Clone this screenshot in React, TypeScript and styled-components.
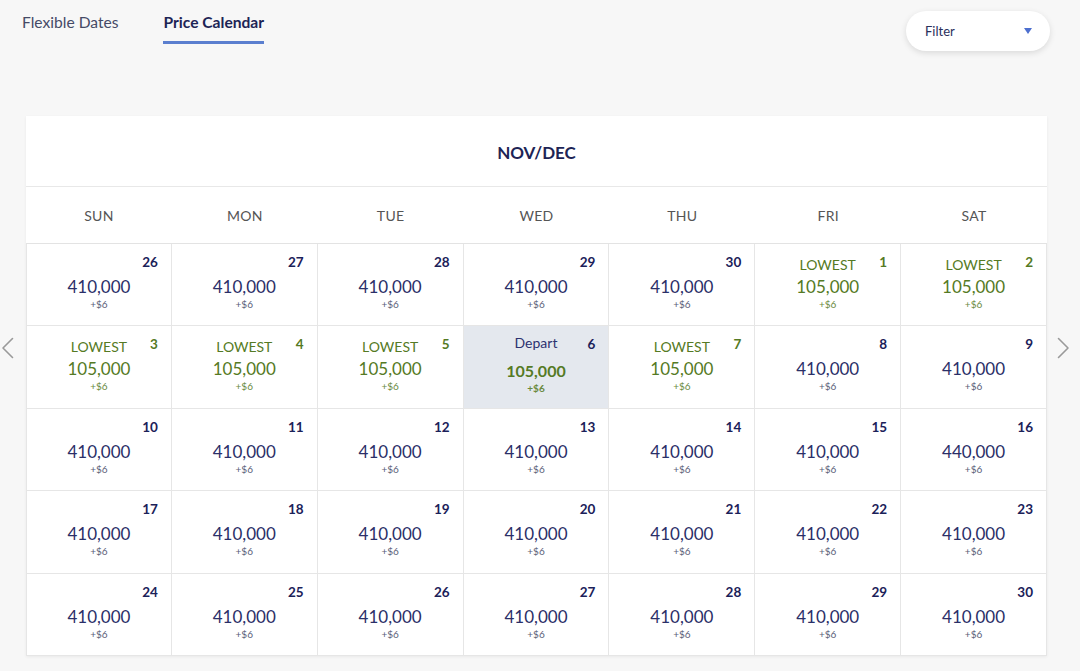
import React from 'react';
import styled, { createGlobalStyle } from 'styled-components';

const GlobalStyle = createGlobalStyle`
  body {
    margin: 0;
    background: #f7f7f7;
    font-family: Lato, "Open Sans", sans-serif;
  }
`;

const Page = styled.div`
  width: 1080px;
  height: 671px;
  overflow: hidden;
`;

const TopBar = styled.div`
  display: flex;
  align-items: flex-start;
  justify-content: space-between;
  padding: 10px 30px 0 22px;
  height: 105px;
  box-sizing: border-box;
`;

const Tabs = styled.div`
  display: flex;
  gap: 45px;
`;

const Tab = styled.div<{ $active?: boolean }>`
  font-size: 15.6px;
  line-height: 20px;
  padding-top: 2px;
  padding-bottom: 9px;
  color: ${(p) => (p.$active ? '#1d2455' : '#454a66')};
  font-weight: ${(p) => (p.$active ? 700 : 400)};
  border-bottom: 3px solid ${(p) => (p.$active ? '#5b7fcf' : 'transparent')};
`;

const FilterButton = styled.div`
  width: 144px;
  height: 40px;
  margin-top: 1px;
  box-sizing: border-box;
  border-radius: 20px;
  background: #fff;
  box-shadow: 0 2px 6px rgba(0, 0, 0, 0.12);
  display: flex;
  align-items: center;
  justify-content: space-between;
  padding: 0 18px 0 19px;
  font-size: 13px;
  color: #2a2f5c;
`;

const Caret = styled.span`
  width: 0;
  height: 0;
  border-left: 4px solid transparent;
  border-right: 4px solid transparent;
  border-top: 6px solid #4d6fcf;
`;

const Stage = styled.div`
  display: flex;
  align-items: flex-start;
  margin-top: 11px;
`;

const Arrow = styled.div<{ $side: 'left' | 'right' }>`
  flex: none;
  width: ${(p) => (p.$side === 'left' ? '26px' : '33px')};
  display: flex;
  justify-content: ${(p) => (p.$side === 'left' ? 'flex-start' : 'center')};
  padding-left: ${(p) => (p.$side === 'left' ? '1px' : '0')};
  box-sizing: border-box;
  margin-top: 221px;
  color: #9a9a9a;
`;

const Card = styled.div`
  flex: none;
  width: 1021px;
  background: #fff;
  box-shadow: 0 1px 3px rgba(0, 0, 0, 0.06);
`;

const MonthHeader = styled.div`
  height: 71px;
  display: flex;
  align-items: center;
  justify-content: center;
  font-size: 17px;
  font-weight: 700;
  color: #1d2455;
  border-bottom: 1px solid #e8e8e8;
  padding-top: 2px;
  box-sizing: border-box;
`;

const DayNames = styled.div`
  display: grid;
  grid-template-columns: repeat(7, 1fr);
  height: 57px;
  border-bottom: 1px solid #e3e3e3;
  box-sizing: border-box;
`;

const DayName = styled.div`
  display: flex;
  align-items: center;
  justify-content: center;
  font-size: 14px;
  color: #555;
  letter-spacing: 0.3px;
  padding-top: 1px;
`;

const Grid = styled.div`
  display: grid;
  grid-template-columns: repeat(7, 1fr);
  grid-auto-rows: 82.4px;
`;

const Cell = styled.div<{ $selected?: boolean }>`
  background: ${(p) => (p.$selected ? '#e4e8ee' : '#fff')};
  border-right: 1px solid #e6e6e6;
  border-bottom: 1px solid #e6e6e6;
  padding: 11px 13px 0 13px;
  box-sizing: border-box;
  display: flex;
  flex-direction: column;
  align-items: center;
  &:nth-child(7n + 1) {
    border-left: 1px solid #e6e6e6;
  }
`;

const TopRow = styled.div`
  width: 100%;
  display: grid;
  grid-template-columns: 1fr auto 1fr;
  align-items: start;
  height: 22px;
`;

const Label = styled.span<{ $tone: 'green' | 'navy' }>`
  grid-column: 2;
  font-size: 14px;
  line-height: 18px;
  margin-top: ${(p) => (p.$tone === 'navy' ? '-3px' : '1px')};
  color: ${(p) => (p.$tone === 'green' ? '#557a24' : '#2d3270')};
`;

const DateNum = styled.span<{ $green?: boolean }>`
  grid-column: 3;
  justify-self: end;
  font-size: 13.5px;
  font-weight: 700;
  line-height: 16px;
  margin-top: -1px;
  color: ${(p) => (p.$green ? '#557a24' : '#1b2159')};
`;

const Price = styled.div<{ $green?: boolean; $bold?: boolean }>`
  font-size: ${(p) => (p.$bold ? '16px' : '17px')};
  font-weight: ${(p) => (p.$bold ? 700 : 400)};
  line-height: 20px;
  margin-top: ${(p) => (p.$bold ? '2px' : '0')};
  color: ${(p) => (p.$green ? '#557a24' : '#2b2f68')};
`;

const Fee = styled.div<{ $green?: boolean; $bold?: boolean }>`
  font-size: 10px;
  line-height: 14px;
  font-weight: ${(p) => (p.$bold ? 700 : 400)};
  color: ${(p) => (p.$green ? '#6a8a3e' : '#5a5e78')};
`;

type Day = { d: number; price: string; lowest?: boolean; depart?: boolean };

const n = (d: number, price = '410,000'): Day => ({ d, price });
const low = (d: number): Day => ({ d, price: '105,000', lowest: true });

const days: Day[] = [
  n(26), n(27), n(28), n(29), n(30), low(1), low(2),
  low(3), low(4), low(5), { d: 6, price: '105,000', depart: true }, low(7), n(8), n(9),
  n(10), n(11), n(12), n(13), n(14), n(15), n(16, '440,000'),
  n(17), n(18), n(19), n(20), n(21), n(22), n(23),
  n(24), n(25), n(26), n(27), n(28), n(29), n(30),
];

const weekdays = ['SUN', 'MON', 'TUE', 'WED', 'THU', 'FRI', 'SAT'];

const Chevron: React.FC<{ dir: 'left' | 'right' }> = ({ dir }) => (
  <svg width="13" height="22" viewBox="0 0 13 22" fill="none">
    <path
      d={dir === 'left' ? 'M11.5 1.5 L2 11 L11.5 20.5' : 'M1.5 1.5 L11 11 L1.5 20.5'}
      stroke="currentColor"
      strokeWidth="1.6"
      strokeLinecap="round"
      strokeLinejoin="round"
    />
  </svg>
);

const App: React.FC = () => {
  return (
    <Page>
      <GlobalStyle />
      <TopBar>
        <Tabs>
          <Tab>Flexible Dates</Tab>
          <Tab $active>Price Calendar</Tab>
        </Tabs>
        <FilterButton>
          <span>Filter</span>
          <Caret />
        </FilterButton>
      </TopBar>

      <Stage>
        <Arrow $side="left">
          <Chevron dir="left" />
        </Arrow>
        <Card>
          <MonthHeader>NOV/DEC</MonthHeader>
          <DayNames>
            {weekdays.map((w) => (
              <DayName key={w}>{w}</DayName>
            ))}
          </DayNames>
          <Grid>
            {days.map((day, i) => {
              const green = day.lowest || day.depart;
              return (
                <Cell key={i} $selected={day.depart}>
                  <TopRow>
                    {day.lowest && <Label $tone="green">LOWEST</Label>}
                    {day.depart && <Label $tone="navy">Depart</Label>}
                    <DateNum $green={day.lowest}>{day.d}</DateNum>
                  </TopRow>
                  <Price $green={green} $bold={day.depart}>
                    {day.price}
                  </Price>
                  <Fee $green={green} $bold={day.depart}>
                    +$6
                  </Fee>
                </Cell>
              );
            })}
          </Grid>
        </Card>
        <Arrow $side="right">
          <Chevron dir="right" />
        </Arrow>
      </Stage>
    </Page>
  );
};

export default App;
